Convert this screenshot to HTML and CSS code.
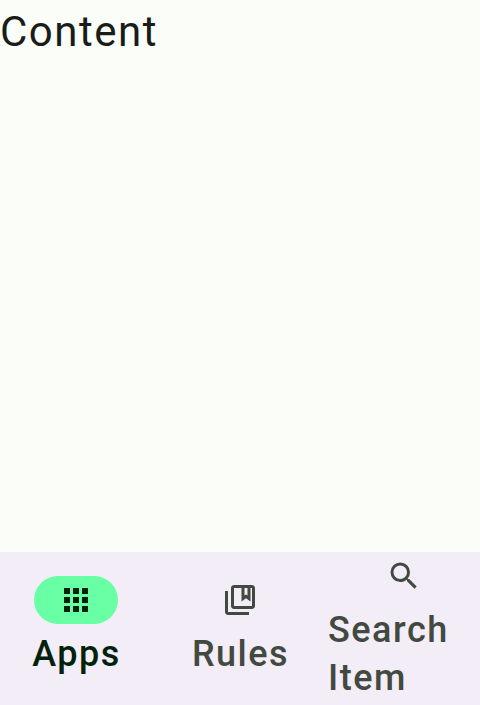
FILE: index.html
```html
<!DOCTYPE html>
<html lang="en">
<head>
<meta charset="utf-8">
<title>Apps</title>
<link rel="stylesheet" href="styles.css">
</head>
<body>
<main class="content">Content</main>
<nav class="nav-bar">
  <a class="nav-item nav-item--active">
    <span class="indicator"><svg class="icon" viewBox="0 0 24 24"><path d="M4 8h4V4H4v4zm6 12h4v-4h-4v4zm-6 0h4v-4H4v4zm0-6h4v-4H4v4zm6 0h4v-4h-4v4zm6-10v4h4V4h-4zm-6 4h4V4h-4v4zm6 6h4v-4h-4v4zm0 6h4v-4h-4v4z"/></svg></span>
    <span class="label">Apps</span>
  </a>
  <a class="nav-item">
    <span class="indicator"><svg class="icon" viewBox="0 0 24 24"><path d="M4 6H2v14c0 1.100.9 2 2 2h14v-2H4V6z"/><path fill-rule="evenodd" d="M20 2H8c-1.100 0-2 .9-2 2v12c0 1.100.9 2 2 2h12c1.100 0 2-.9 2-2V4c0-1.100-.9-2-2-2zM15 4h2v5l-1-.75L15 9V4zM8 4h5v9l3-2.250L19 13V4h1v12H8V4z"/></svg></span>
    <span class="label">Rules</span>
  </a>
  <a class="nav-item nav-item--tall">
    <span class="indicator"><svg class="icon" viewBox="0 0 24 24"><path d="M15.500 14h-.79l-.28-.27A6.471 6.471 0 0 0 16 9.500 6.500 6.500 0 1 0 9.500 16c1.610 0 3.090-.59 4.230-1.570l.27.28v.79l5 4.990L20.490 19l-4.990-5zm-6 0C7.010 14 5 11.990 5 9.500S7.010 5 9.500 5 14 7.010 14 9.500 11.990 14 9.500 14z"/></svg></span>
    <span class="label">Search Item</span>
  </a>
</nav>
</body>
</html>
```

FILE: styles.css
```css
body {
  margin: 0;
  height: 705px;
  display: flex;
  flex-direction: column;
  background: #fbfef8;
  color: #191c19;
  font-family: Roboto, sans-serif;
  overflow: hidden;
}

.content {
  flex: 1;
  font-size: 42px;
  line-height: 63px;
  letter-spacing: 1.5px;
}

.nav-bar {
  height: 153px;
  display: grid;
  grid-template-columns: 152px 152px 152px;
  column-gap: 12px;
  background: #f3edf7;
}

.nav-item {
  display: flex;
  flex-direction: column;
  align-items: center;
  padding-top: 24px;
  color: #424940;
}

.nav-item--active {
  color: #00210b;
}

.nav-item--tall {
  padding-top: 0;
}

.indicator {
  width: 84px;
  height: 48px;
  border-radius: 24px;
  display: flex;
  align-items: center;
  justify-content: center;
}

.nav-item--active .indicator {
  background: #69ffa4;
}

.icon {
  width: 36px;
  height: 36px;
  fill: currentColor;
}

.label {
  margin-top: 6px;
  padding-left: 1px;
  font-size: 36px;
  font-weight: 500;
  line-height: 48px;
  letter-spacing: 1.5px;
}

.nav-item--tall .label {
  width: 152px;
  padding-left: 0;
}
```
